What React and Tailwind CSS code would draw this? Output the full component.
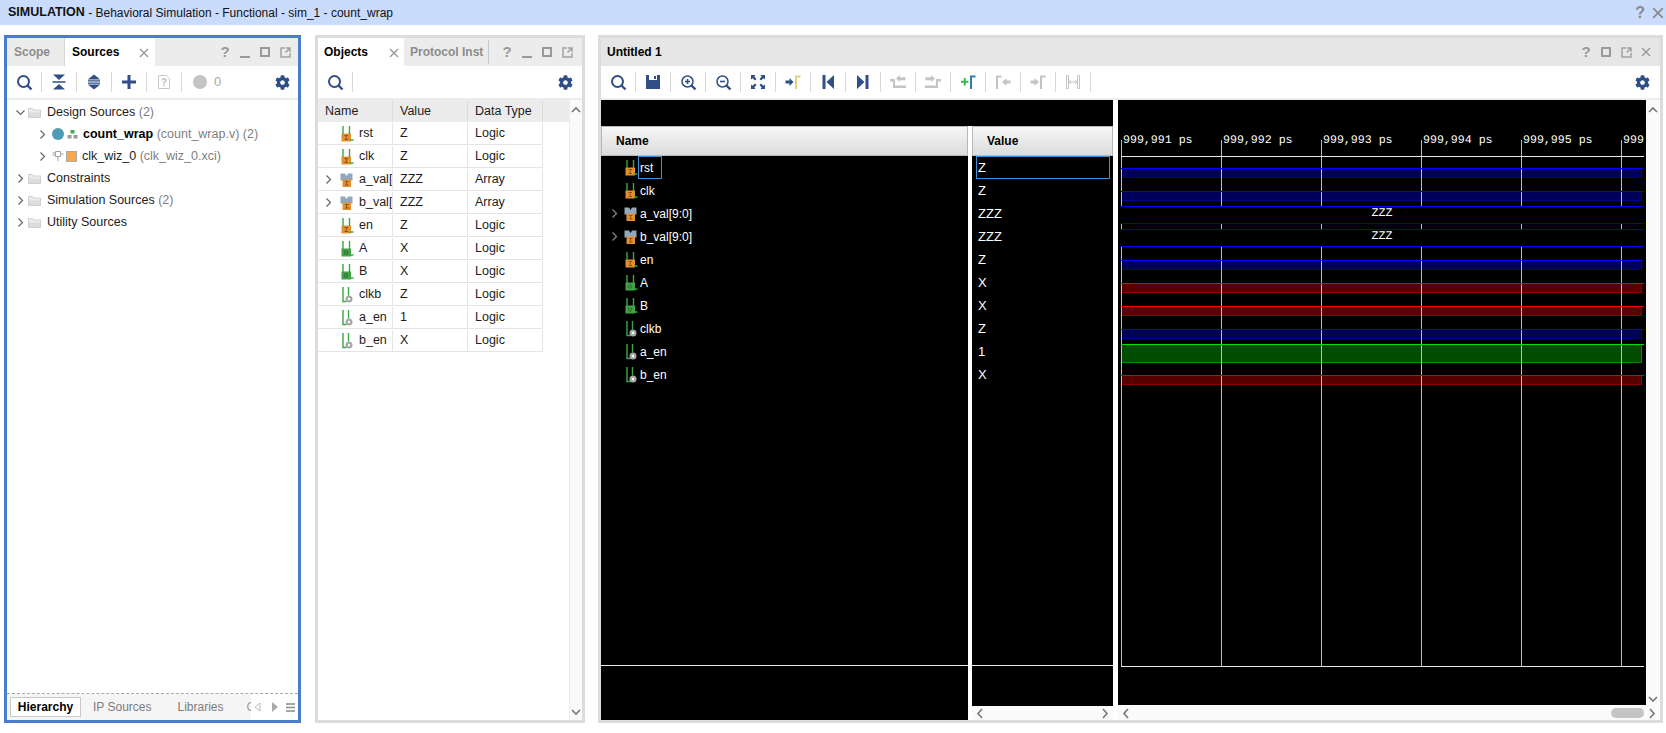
import { FaCog } from 'react-icons/fa'

const NAVY = '#2f4f86'
const SOFT = '#c4c4c4'

const signals = [
  { name: 'rst', value: 'Z', type: 'Logic', kind: 'in' },
  { name: 'clk', value: 'Z', type: 'Logic', kind: 'in' },
  { name: 'a_val[9:0]', value: 'ZZZ', type: 'Array', kind: 'bus' },
  { name: 'b_val[9:0]', value: 'ZZZ', type: 'Array', kind: 'bus' },
  { name: 'en', value: 'Z', type: 'Logic', kind: 'in' },
  { name: 'A', value: 'X', type: 'Logic', kind: 'out' },
  { name: 'B', value: 'X', type: 'Logic', kind: 'out' },
  { name: 'clkb', value: 'Z', type: 'Logic', kind: 'ctl' },
  { name: 'a_en', value: '1', type: 'Logic', kind: 'ctl' },
  { name: 'b_en', value: 'X', type: 'Logic', kind: 'ctl' },
]

// y is relative to the top of the wave canvas
const traces = [
  { y: 68, h: 9, line: '#0000ff', fill: '#00005a', edge: '#00008c' },
  { y: 91, h: 9, line: '#0000ee', fill: '#00005a', edge: '#00008c' },
  { y: 160, h: 9, line: '#0000ff', fill: '#00005a', edge: '#00008c' },
  { y: 183, h: 9, line: '#ee0000', fill: '#560000', edge: '#8c0000' },
  { y: 206, h: 9, line: '#ff0000', fill: '#5c0000', edge: '#8c0000' },
  { y: 229, h: 9, line: '#0000e0', fill: '#00005a', edge: '#00008c' },
  { y: 244, h: 18, line: '#00e000', fill: '#004d00', edge: '#008c00' },
  { y: 275, h: 9, line: '#e00000', fill: '#560000', edge: '#8c0000' },
]

const ticks = [3, 103, 203, 303, 403, 503]

function Chevron({ open = false, color = '#666' }) {
  return (
    <svg width="9" height="9" viewBox="0 0 9 9" fill="none" stroke={color} strokeWidth="1.2">
      <path d={open ? 'M0.5 2.5L4.5 6.5L8.5 2.5' : 'M2.5 0.5L6.5 4.5L2.5 8.5'} />
    </svg>
  )
}

function Folder() {
  return (
    <svg width="13" height="11" viewBox="0 0 13 11" className="shrink-0">
      <path d="M0.5 1.5h4l1 1.5h7v7.5h-12z" fill="#ececec" stroke="#cfcfcf" />
      <path d="M1 5.5h11V10H1z" fill="#dcdcdc" />
    </svg>
  )
}

function Port({ kind }) {
  return (
    <svg width="14" height="16" viewBox="0 -1.5 14 16" className="shrink-0">
      {kind === 'in' && (
        <g>
          <rect x="1.5" y="6" width="9.5" height="8" fill="#e88f2c" />
          <path d="M3 -1.5V6.500M9.500 -1.500V6.500M10 12.500h3.500" stroke="#35a945" strokeWidth="1.4" fill="none" />
          <path d="M4.500 8h3.500M6.200 8v4M4.500 12h3.500" stroke="#7a5a2a" fill="none" />
        </g>
      )}
      {kind === 'bus' && (
        <g>
          <path d="M0.500 0h4.500l1.500 2.500L8 0h4.500v7h-12z" fill="#8fa9c1" />
          <rect x="2.500" y="6" width="8.500" height="7.500" fill="#e88f2c" />
          <path d="M5 8h3.500M6.700 8v3.500M5 11.500h3.500" stroke="#7a5a2a" fill="none" />
        </g>
      )}
      {kind === 'out' && (
        <g>
          <rect x="1.500" y="6" width="9.500" height="8" fill="#45a049" />
          <path d="M3 -1.500V6.500M9.500 -1.500V6.500M10 12.500h3.500" stroke="#35a945" strokeWidth="1.4" fill="none" />
          <circle cx="6" cy="10" r="1.700" fill="none" stroke="#2a6b2e" />
        </g>
      )}
      {kind === 'ctl' && (
        <g>
          <path d="M3 -1.500V13H6.500M8.500 -1.500V7" stroke="#35a945" strokeWidth="1.4" fill="none" />
          <circle cx="9" cy="10.500" r="3.500" fill="#a9a9a9" />
          <circle cx="9" cy="10.500" r="1.200" fill="#fff" />
        </g>
      )}
    </svg>
  )
}

function SearchIcon({ zoom }) {
  return (
    <svg width="17" height="17" viewBox="0 0 17 17" fill="none" stroke={NAVY} strokeWidth="2">
      <circle cx="7.500" cy="7.500" r="5.500" strokeWidth={zoom ? 1.5 : 2} />
      <path d="M11.500 11.500L15.500 15.500" strokeWidth="2.4" />
      {zoom === 'in' && <path d="M5 7.500h5M7.500 5v5" strokeWidth="1.6" />}
      {zoom === 'out' && <path d="M5 7.500h5" strokeWidth="1.6" />}
    </svg>
  )
}

function Icon({ name }) {
  const box = { width: 16, height: 16, viewBox: '0 0 16 16' }
  switch (name) {
    case 'collapse':
      return (
        <svg {...box} fill={NAVY}>
          <path d="M1.500 7h13v.8h-13zM1.500 8.300h13v.8h-13zM2 0.500h12L8 6zM2 15.500h12L8 10z" />
        </svg>
      )
    case 'expand':
      return (
        <svg {...box} fill={NAVY}>
          <path d="M8 0.500l6.200 5H1.800zM8 15.500l-6.200-5h12.400zM2 6.300h12v1.100H2zM2 8.600h12v1.100H2z" />
        </svg>
      )
    case 'plus':
      return (
        <svg {...box} fill={NAVY}>
          <path d="M6.500 1h3v5.500H15v3H9.500V15h-3V9.500H1v-3h5.500z" />
        </svg>
      )
    case 'doc':
      return (
        <svg {...box}>
          <path d="M2.500 1.500h8l3 3v10h-11z" fill="#fff" stroke="#c8c8c8" />
          <text x="8" y="12" textAnchor="middle" fontSize="10" fontWeight="700" fill="#bdbdbd" fontFamily="Liberation Sans">?</text>
        </svg>
      )
    case 'save':
      return (
        <svg {...box} fill={NAVY}>
          <path d="M1 1h14v14H1z" />
          <path d="M4 1h8v5H4z" fill="#fff" />
          <path d="M9 2h2v3H9z" fill={NAVY} />
        </svg>
      )
    case 'fit':
      return (
        <svg {...box} fill={NAVY}>
          <path d="M1 1h4.500L4.300 2.600 6.500 5 5 6.500 2.600 4.300 1 5.500zM15 1v4.500l-1.600-1.200L11 6.500 9.500 5l2.200-2.400L10.500 1zM1 15v-4.500l1.600 1.200L5 9.500 6.500 11l-2.200 2.400L5.500 15zM15 15h-4.500l1.200-1.600L9.500 11 11 9.500l2.400 2.200 1.600-1.200z" />
        </svg>
      )
    case 'cursor':
      return (
        <svg {...box}>
          <path d="M0.500 6.500h4V4l4 4-4 4V9.500h-4z" fill={NAVY} />
          <path d="M10 15V1.500h5.500v2H12V15z" fill="#e8cf7c" />
        </svg>
      )
    case 'first':
      return (
        <svg {...box} fill={NAVY}>
          <path d="M2.500 1h3v14h-3zM14 1v14L6.500 8z" />
        </svg>
      )
    case 'last':
      return (
        <svg {...box} fill={NAVY}>
          <path d="M10.500 1h3v14h-3zM2 1v14l7.500-7z" />
        </svg>
      )
    case 'prevEdge':
      return (
        <svg {...box} fill={SOFT}>
          <path d="M0 5h5v6.500h11V14H3V7.500H0z" />
          <path d="M6 4.500L10 1v2.300h5.500v3H10V8z" />
        </svg>
      )
    case 'nextEdge':
      return (
        <svg {...box} fill={SOFT}>
          <path d="M16 5h-5v6.500H0V14h13V7.500h3z" />
          <path d="M10 4.500L6 1v2.300H.5v3H6V8z" />
        </svg>
      )
    case 'marker':
      return (
        <svg {...box}>
          <path d="M1 6.700h2.800V4h1.900v2.700h2.700v2H5.700v2.800H3.800V8.700H1z" fill="#3cb54a" />
          <path d="M10 15V1.500h5.500v2H12V15z" fill="#2f7fae" />
        </svg>
      )
    case 'prevMarker':
      return (
        <svg {...box} fill={SOFT}>
          <path d="M1 15V1.500h5.500v2H3V15zM15.500 6.500h-4V4l-4.500 4 4.500 4V9.500h4z" />
        </svg>
      )
    case 'nextMarker':
      return (
        <svg {...box} fill={SOFT}>
          <path d="M0.500 6.500h4V4L9 8l-4.500 4V9.500h-4zM10 15V1.500h5.500v2H12V15z" />
        </svg>
      )
    case 'swap':
      return (
        <svg {...box} fill="none" stroke={SOFT}>
          <path d="M1.500 1.500h2v13h-2zM12.500 1.500h2v13h-2zM4 8h8M6 6L4 8l2 2M10 6l2 2-2 2" />
        </svg>
      )
    default:
      return null
  }
}

function Tool({ children }) {
  return (
    <div className="flex w-[35px] shrink-0 items-center">
      <div className="flex flex-1 items-center justify-center">{children}</div>
      <div className="h-[20px] w-px bg-[#d8d8d8]" />
    </div>
  )
}

function Gear() {
  return <FaCog size={15} color={NAVY} />
}

function Toolbar({ children, gearClass }) {
  return (
    <div className="flex h-[34px] shrink-0 border-b-2 border-[#ececec] bg-white">
      {children}
      <div className={`ml-auto flex items-center ${gearClass}`}>
        <Gear />
      </div>
    </div>
  )
}

function WinIcons({ minimize = true, close = false, className = '' }) {
  const cell = 'flex h-full w-[20px] items-center justify-center'
  return (
    <div className={`ml-auto flex h-full items-center ${className}`}>
      <div className={`${cell} text-[15px] font-bold text-[#999]`}>?</div>
      {minimize && (
        <div className={cell}>
          <div className="mt-[9px] h-[2px] w-[10px] bg-[#999]" />
        </div>
      )}
      <div className={cell}>
        <div className="h-[10px] w-[10px] border-2 border-[#999]" />
      </div>
      <div className={cell}>
        <svg width="11" height="11" viewBox="0 0 11 11" fill="none" stroke="#a2a2a2" strokeWidth="1.5">
          <path d="M5 1H1v9h9V6M6 1h4v4M10 1L5.500 5.500" />
        </svg>
      </div>
      {close && <div className={cell}><CloseX /></div>}
    </div>
  )
}

function CloseX({ size = 10, color = '#999' }) {
  return (
    <svg width={size} height={size} viewBox="0 0 10 10" stroke={color} strokeWidth="1.4">
      <path d="M1 1l8 8M9 1l-8 8" />
    </svg>
  )
}

function TreeRow({ indent, open, icon, children }) {
  return (
    <div className={`flex h-[22px] items-center ${indent ? 'pl-[31px]' : 'pl-[9px]'}`}>
      <div className="flex w-[9px] justify-center">
        <Chevron open={open} />
      </div>
      {icon}
      <div className="whitespace-nowrap text-[12.5px] text-[#1c1c1c]">{children}</div>
    </div>
  )
}

function SourcesPanel() {
  const folder = <span className="ml-[3px] mr-[6px] flex"><Folder /></span>
  return (
    <div className="flex h-full w-[297px] shrink-0 flex-col border-[3px] border-[#4a7ccf] bg-white">
      <div className="flex h-[28px] shrink-0 items-center bg-[#ececec]">
        <div className="flex h-full w-[58px] items-center border-r border-[#d8d8d8] pl-[7px] text-[12px] font-bold text-[#8c8c8c]">Scope</div>
        <div className="flex h-full w-[90px] items-center bg-white pl-[7px] text-[12px] font-bold text-black">
          Sources
          <span className="ml-auto mr-[6px] mt-[2px]"><CloseX /></span>
        </div>
        <WinIcons className="pr-[3px]" />
      </div>
      <Toolbar gearClass="pr-[8px]">
        <Tool><SearchIcon /></Tool>
        <Tool><Icon name="collapse" /></Tool>
        <Tool><Icon name="expand" /></Tool>
        <Tool><Icon name="plus" /></Tool>
        <Tool><Icon name="doc" /></Tool>
        <div className="ml-[11px] flex items-center gap-[7px]">
          <div className="h-[14px] w-[14px] rounded-full bg-[#c4c4c4]" />
          <span className="text-[13px] text-[#a8a8a8]">0</span>
        </div>
      </Toolbar>
      <div className="flex-1 pt-[1px]">
        <TreeRow open icon={folder}>
          Design Sources <span className="text-[#808080]">(2)</span>
        </TreeRow>
        <TreeRow
          indent
          icon={
            <span className="ml-[5px] mr-[5px] flex items-center gap-[3px]">
              <span className="h-[12px] w-[12px] rounded-full bg-[#4f9ab5]" />
              <svg width="11" height="9" viewBox="0 0 11 9">
                <path d="M3.500 0h4v3.500h-4z" fill="#3cae4a" />
                <path d="M0.500 5h4v3.500h-4zM6.500 5h4v3.500h-4z" fill="#9a9a9a" />
              </svg>
            </span>
          }
        >
          <span className="font-bold text-black">count_wrap</span> <span className="text-[#808080]">(count_wrap.v) (2)</span>
        </TreeRow>
        <TreeRow
          indent
          icon={
            <span className="ml-[5px] mr-[5px] flex items-center gap-[2px]">
              <svg width="12" height="12" viewBox="0 0 12 12" fill="none" stroke="#a2a2a2">
                <path d="M3.500 1.500h5v5h-5zM6 6.500V11M0.500 3h3M0.500 5h3M8.500 4h3" />
              </svg>
              <span className="h-[11px] w-[11px] border border-[#aaa] bg-[#f5a94a]" />
            </span>
          }
        >
          clk_wiz_0 <span className="text-[#808080]">(clk_wiz_0.xci)</span>
        </TreeRow>
        <TreeRow icon={folder}>Constraints</TreeRow>
        <TreeRow icon={folder}>
          Simulation Sources <span className="text-[#808080]">(2)</span>
        </TreeRow>
        <TreeRow icon={folder}>Utility Sources</TreeRow>
      </div>
      <div className="flex h-[27px] shrink-0 items-center border-t border-dashed border-[#a8a8a8] bg-white">
        <div className="flex h-full w-[244px] items-center overflow-hidden bg-[#f5f5f5] pl-[3px] text-[12px]">
          <div className="flex h-[20px] w-[71px] shrink-0 items-center justify-center border border-[#c8c8c8] bg-white font-bold text-black">Hierarchy</div>
          <div className="ml-[12px] shrink-0 text-[#7c7c7c]">IP Sources</div>
          <div className="ml-[26px] shrink-0 text-[#7c7c7c]">Libraries</div>
          <div className="ml-[23px] shrink-0 text-[#9a9a9a]">Compile Order</div>
        </div>
        <div className="flex items-center">
          <svg width="9" height="10" viewBox="0 0 9 10" fill="none" stroke="#bbb" className="ml-[2px]">
            <path d="M7 1L2 5l5 4z" />
          </svg>
          <svg width="8" height="10" viewBox="0 0 8 10" fill="#aaa" className="ml-[9px]">
            <path d="M1 0l6 5-6 5z" />
          </svg>
          <svg width="9" height="9" viewBox="0 0 9 9" stroke="#8a8a8a" className="ml-[7px]">
            <path d="M0 1h9M0 4.500h9M0 8h9" strokeWidth="1.4" />
          </svg>
        </div>
      </div>
    </div>
  )
}

function ScrollEnd({ up }) {
  return (
    <svg width="10" height="7" viewBox="0 0 10 7" fill="none" stroke="#777" strokeWidth="1.6">
      <path d={up ? 'M1 6l4-4 4 4' : 'M1 1l4 4 4-4'} />
    </svg>
  )
}

function ObjectsPanel() {
  return (
    <div className="ml-[1px] flex h-full w-[270px] shrink-0 flex-col border-[3px] border-[#dcdcdc] bg-white">
      <div className="flex h-[28px] shrink-0 items-center bg-[#ececec]">
        <div className="flex h-full w-[86px] items-center bg-white pl-[6px] text-[12px] font-bold text-black">
          Objects
          <span className="ml-auto mr-[5px] mt-[2px]"><CloseX /></span>
        </div>
        <div className="flex h-[24px] w-[85px] items-center whitespace-nowrap border-r border-[#c8c8c8] pl-[6px] text-[12px] font-bold text-[#8c8c8c]">Protocol Inst</div>
        <WinIcons className="pr-[5px]" />
      </div>
      <Toolbar gearClass="pr-[9px]">
        <Tool><SearchIcon /></Tool>
      </Toolbar>
      <div className="flex flex-1 overflow-hidden">
        <div className="flex-1 text-[12.5px] text-[#1c1c1c]">
          <div className="flex h-[22px] items-center bg-[#ececec] pt-[1px]">
            <div className="flex h-full w-[75px] items-center border-r border-[#dcdcdc] pl-[7px]">Name</div>
            <div className="flex h-full w-[75px] items-center border-r border-[#dcdcdc] pl-[7px]">Value</div>
            <div className="flex h-full w-[75px] items-center border-r border-[#dcdcdc] pl-[7px]">Data Type</div>
          </div>
          {signals.map((s) => (
            <div key={s.name} className="flex h-[23px] w-[225px] items-center border-b border-[#e4e4e4] pt-[1px]">
              <div className="flex h-full w-[75px] items-center overflow-hidden border-r border-[#e4e4e4] pl-[6px]">
                <div className="flex w-[9px] shrink-0 justify-center">{s.kind === 'bus' && <Chevron />}</div>
                <div className="ml-[7px] mr-[5px] flex"><Port kind={s.kind} /></div>
                <span className="whitespace-nowrap">{s.name}</span>
              </div>
              <div className="flex h-full w-[75px] items-center border-r border-[#e4e4e4] pl-[7px]">{s.value}</div>
              <div className="flex h-full w-[75px] items-center border-r border-[#e4e4e4] pl-[7px]">{s.type}</div>
            </div>
          ))}
        </div>
        <div className="flex w-[13px] shrink-0 flex-col items-center justify-between border-l border-[#ececec] bg-[#fafafa] pb-[4px] pt-[6px]">
          <ScrollEnd up />
          <ScrollEnd />
        </div>
      </div>
    </div>
  )
}

function ColumnHead({ children, className }) {
  return (
    <>
      <div className="h-[26px] shrink-0 bg-black" />
      <div className={`flex h-[30px] shrink-0 items-center border border-[#b8b8b8] bg-gradient-to-b from-[#f6f6f6] to-[#dcdcdc] text-[12px] font-bold text-black ${className}`}>
        {children}
      </div>
    </>
  )
}

function WaveCanvas() {
  return (
    <svg width="528" height="605" viewBox="0 0 528 605" shapeRendering="crispEdges" className="block shrink-0 bg-black">
      {traces.map((t) => (
        <rect key={t.y} x="3.5" y={t.y + 0.5} width="520" height={t.h} fill={t.fill} stroke={t.edge} />
      ))}
      {ticks.map((x) => (
        <rect key={x} x={x} y="40" width="1" height="526" fill="#d0d0d0" opacity="0.9" />
      ))}
      {/* bus rows hide the ticks */}
      <rect x="3" y="107" width="523" height="16" fill="#000" />
      <rect x="3" y="130" width="523" height="16" fill="#000" />
      {traces.map((t) => (
        <rect key={t.y} x="3" y={t.y} width="523" height="1" fill={t.line} />
      ))}
      <rect x="3" y="106" width="523" height="1" fill="#0000ff" />
      <rect x="3" y="123" width="523" height="1" fill="#0000cc" />
      <rect x="3" y="129" width="523" height="1" fill="#0000cc" />
      <rect x="3" y="146" width="523" height="1" fill="#0000ff" />
      <rect x="3" y="56" width="523" height="1" fill="#e8e8e8" />
      <rect x="3" y="566" width="523" height="1" fill="#e8e8e8" />
      <g fill="#fff" fontFamily="Liberation Mono" fontSize="11.6" textRendering="geometricPrecision">
        {['999,991 ps', '999,992 ps', '999,993 ps', '999,994 ps', '999,995 ps', '999'].map((label, i) => (
          <text key={label} x={ticks[i] + 2} y="43">{label}</text>
        ))}
        <text x="264" y="116" textAnchor="middle">ZZZ</text>
        <text x="264" y="139" textAnchor="middle">ZZZ</text>
      </g>
    </svg>
  )
}

function HScroll({ thumb }) {
  return (
    <div className="flex h-[14px] shrink-0 items-center bg-[#fafafa] px-[4px]">
      <svg width="7" height="11" viewBox="0 0 7 11" fill="none" stroke="#777" strokeWidth="1.6"><path d="M6 1L2 5.500 6 10" /></svg>
      {thumb && <div className="ml-auto mr-[5px] h-[10px] w-[33px] rounded-full bg-[#c4c4c4]" />}
      <svg width="7" height="11" viewBox="0 0 7 11" fill="none" stroke="#777" strokeWidth="1.6" className={thumb ? '' : 'ml-auto'}><path d="M1 1l4 4.500L1 10" /></svg>
    </div>
  )
}

function WavePanel() {
  return (
    <div className="flex h-full w-[1065px] shrink-0 flex-col border-[3px] border-[#dcdcdc] bg-white">
      <div className="flex h-[28px] shrink-0 items-center bg-[#e6e6e6] pl-[6px] text-[12px] font-bold text-black">
        Untitled 1
        <WinIcons minimize={false} close className="pr-[4px]" />
      </div>
      <Toolbar gearClass="pr-[10px]">
        <Tool><SearchIcon /></Tool>
        <Tool><Icon name="save" /></Tool>
        <Tool><SearchIcon zoom="in" /></Tool>
        <Tool><SearchIcon zoom="out" /></Tool>
        <Tool><Icon name="fit" /></Tool>
        <Tool><Icon name="cursor" /></Tool>
        <Tool><Icon name="first" /></Tool>
        <Tool><Icon name="last" /></Tool>
        <Tool><Icon name="prevEdge" /></Tool>
        <Tool><Icon name="nextEdge" /></Tool>
        <Tool><Icon name="marker" /></Tool>
        <Tool><Icon name="prevMarker" /></Tool>
        <Tool><Icon name="nextMarker" /></Tool>
        <Tool><Icon name="swap" /></Tool>
      </Toolbar>
      <div className="flex min-h-0 flex-1">
        {/* name column */}
        <div className="flex w-[367px] shrink-0 flex-col bg-black">
          <ColumnHead className="pl-[14px]">Name</ColumnHead>
          <div className="h-[510px] shrink-0 border-b border-[#e8e8e8] text-[12px] text-white">
            {signals.map((s, i) => (
              <div key={s.name} className="flex h-[23px] items-center pl-[9px]">
                <div className="flex w-[9px] justify-center">{s.kind === 'bus' && <Chevron color="#888" />}</div>
                <div className="ml-[5px] flex"><Port kind={s.kind} /></div>
                <div className={`flex h-full items-center whitespace-nowrap pl-[1px] ${i === 0 ? 'w-[24px] border border-[#3d8fd6]' : 'border border-transparent'}`}>{s.name}</div>
              </div>
            ))}
          </div>
        </div>
        {/* black band runs on over the gap */}
        <div className="flex w-[4px] shrink-0 flex-col bg-white">
          <div className="h-[26px] bg-black" />
        </div>
        {/* value column */}
        <div className="flex w-[141px] shrink-0 flex-col">
          <ColumnHead className="pl-[14px]">Value</ColumnHead>
          <div className="h-[510px] shrink-0 border-b border-[#e8e8e8] bg-black text-[13px] text-white">
            {signals.map((s, i) => (
              <div key={s.name} className={`ml-[4px] mr-[3px] flex h-[23px] items-center pl-[1px] ${i === 0 ? 'border border-[#3d8fd6]' : 'border border-transparent'}`}>{s.value}</div>
            ))}
          </div>
          <div className="flex-1 bg-black" />
          <HScroll />
        </div>
        <div className="w-[5px] shrink-0 bg-white" />
        {/* wave column */}
        <div className="flex min-w-0 flex-1 flex-col">
          <div className="flex flex-1">
            <WaveCanvas />
            <div className="flex flex-1 flex-col items-center justify-between bg-[#fafafa] pb-[3px] pt-[6px]">
              <ScrollEnd up />
              <ScrollEnd />
            </div>
          </div>
          <HScroll thumb />
        </div>
      </div>
    </div>
  )
}

export default function App() {
  return (
    <div className="flex h-[733px] w-[1666px] flex-col overflow-hidden bg-white font-['Liberation_Sans',sans-serif]">
      <div className="flex h-[25px] shrink-0 items-center bg-[#c9dcfd] pl-[8px] pr-[1px] text-[12px] text-[#111]">
        <span className="text-[12.5px] font-bold">SIMULATION</span>
        <span className="whitespace-pre"> - Behavioral Simulation - Functional - sim_1 - count_wrap</span>
        <span className="ml-auto text-[16px] font-bold text-[#8a8a8a]">?</span>
        <span className="ml-[7px] mr-[1px]"><CloseX size={12} color="#8a8a8a" /></span>
      </div>
      <div className="mt-[10px] flex h-[688px] gap-[13px] pl-[4px]">
        <SourcesPanel />
        <ObjectsPanel />
        <WavePanel />
      </div>
    </div>
  )
}
